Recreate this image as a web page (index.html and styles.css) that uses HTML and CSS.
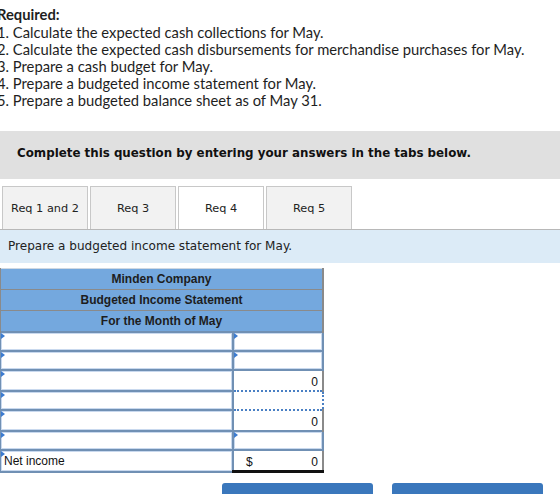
FILE: index.html
```html
<!DOCTYPE html>
<html lang="en">
<head>
<meta charset="utf-8">
<title>Budgeted income statement</title>
<link rel="stylesheet" href="styles.css">
</head>
<body>
<div class="required">
  <div class="req-title">Required:</div>
  <div>1. Calculate the expected cash collections for May.</div>
  <div>2. Calculate the expected cash disbursements for merchandise purchases for May.</div>
  <div>3. Prepare a cash budget for May.</div>
  <div>4. Prepare a budgeted income statement for May.</div>
  <div>5. Prepare a budgeted balance sheet as of May 31.</div>
</div>

<div class="notice">Complete this question by entering your answers in the tabs below.</div>

<div class="tabs">
  <div class="tab">Req 1 and 2</div>
  <div class="tab">Req 3</div>
  <div class="tab active">Req 4</div>
  <div class="tab">Req 5</div>
</div>
<div class="instruction">Prepare a budgeted income statement for May.</div>

<table class="sheet">
  <colgroup><col class="c-label"><col class="c-value"></colgroup>
  <tr><th colspan="2">Minden Company</th></tr>
  <tr><th colspan="2">Budgeted Income Statement</th></tr>
  <tr><th colspan="2">For the Month of May</th></tr>
  <tr><td class="inp"><span class="mark"></span></td><td class="inp"><span class="mark"></span></td></tr>
  <tr><td class="inp"><span class="mark"></span></td><td class="inp"><span class="mark"></span></td></tr>
  <tr><td class="inp"><span class="mark"></span></td><td class="num subtotal">0</td></tr>
  <tr><td class="inp"><span class="mark"></span></td><td class="dotted"></td></tr>
  <tr><td class="inp"><span class="mark"></span></td><td class="num">0</td></tr>
  <tr><td class="inp"><span class="mark"></span></td><td class="inp"><span class="mark"></span></td></tr>
  <tr><td class="inp label"><span class="mark"></span>Net income</td><td class="num total"><span class="cur">$</span>0</td></tr>
</table>

<div class="nav">
  <div class="btn">&lsaquo; Req 3</div>
  <div class="btn">Req 5 &rsaquo;</div>
</div>
</body>
</html>
```

FILE: styles.css
```css
html, body {
  margin: 0;
  padding: 0;
  background: #fff;
  overflow: hidden;
}

body {
  width: 560px;
  height: 494px;
  color: #222;
}

.required {
  font-family: Lato, "Open Sans", sans-serif;
  font-size: 14.75px;
  line-height: 17px;
  padding-top: 6px;
  margin-left: -3px;
  color: #1e1e1e;
}

.req-title {
  font-weight: bold;
  margin-bottom: 1px;
}

.notice {
  margin-top: 22px;
  height: 48px;
  box-sizing: border-box;
  padding: 14px 0 0 17px;
  background: #e0e0e0;
  font-family: "DejaVu Sans", Verdana, sans-serif;
  font-weight: bold;
  font-size: 11.85px;
  line-height: 16px;
  color: #111;
}

.tabs {
  display: flex;
  gap: 2px;
  margin-top: 7px;
  padding-left: 2px;
  border-bottom: 1px solid #b8b8b8;
}

.tab {
  width: 84px;
  height: 42px;
  border: 1px solid #c8c8c8;
  border-bottom: none;
  background: #f2f2f2;
  font-family: "DejaVu Sans", Verdana, sans-serif;
  font-size: 11.3px;
  line-height: 44px;
  text-align: center;
  color: #222;
}

.tab.active {
  background: #fff;
}

.instruction {
  height: 33px;
  box-sizing: border-box;
  padding: 8px 0 0 8px;
  background: #dcebf7;
  font-family: "DejaVu Sans", Verdana, sans-serif;
  font-size: 12.05px;
  line-height: 16px;
  color: #222;
}

.sheet {
  margin-top: 5px;
  margin-left: -1px;
  border-collapse: collapse;
  table-layout: fixed;
  width: 323px;
  font-family: "Liberation Sans", Arial, sans-serif;
  font-size: 12px;
}

.c-label { width: 233px; }
.c-value { width: 90px; }

.sheet th {
  height: 20px;
  padding: 0;
  background: #74a8de;
  border: 2px solid #8a8a8a;
  border-top-width: 1px;
  border-bottom-width: 1px;
  font-weight: bold;
  color: #1d1d1d;
  text-align: center;
}

.sheet tr:first-child th {
  border-top: 1px solid #cfd8e2;
}

.sheet td {
  height: 17px;
  padding: 0 4px 0 3px;
  position: relative;
  background: #fff;
  border: 2px solid #7090b4;
  box-shadow: inset 0 0 0 1px #c9d9ee;
}

.sheet td.num {
  text-align: right;
  border: 1px solid #d0d0d0;
  border-right: 2px solid #8a8a8a;
  box-shadow: none;
  color: #111;
  padding-top: 2px;
}

.sheet td.subtotal {
  border-top: 2px solid #111;
}

.sheet td.total {
  border-top: 1px solid #111;
  border-bottom: 3px solid #111;
}

.sheet td.dotted {
  border: 2px dotted #4a80c4;
  box-shadow: none;
}

.cur {
  float: left;
  margin-left: 9px;
}

.label {
  color: #111;
  padding-top: 2px;
}

.mark {
  position: absolute;
  left: 0;
  top: 0;
  width: 0;
  height: 0;
  border-top: 3px solid transparent;
  border-bottom: 3px solid transparent;
  border-left: 4px solid #3b7bd0;
}

.nav {
  display: flex;
  gap: 19px;
  margin-top: 10px;
  padding-left: 222px;
}

.btn {
  width: 151px;
  height: 36px;
  box-sizing: border-box;
  padding-top: 9px;
  border-radius: 3px;
  background: #3a77bc;
  color: #fff;
  font-family: "Liberation Sans", Arial, sans-serif;
  font-size: 14px;
  text-align: center;
}
```
